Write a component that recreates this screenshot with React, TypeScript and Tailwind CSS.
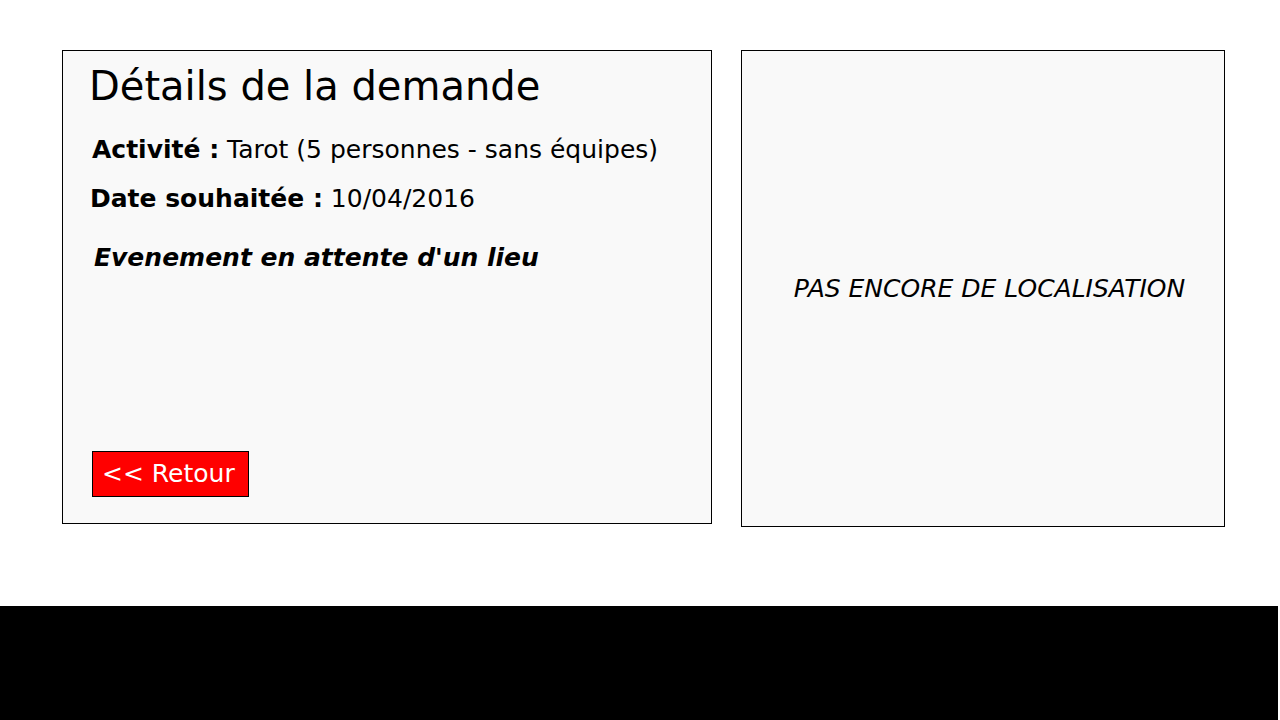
export default function App() {
  return (
    <div className="flex min-h-screen flex-col bg-white font-['DejaVu_Sans',sans-serif] text-[25px] leading-8 text-black">
      <main className="grid flex-1 grid-cols-[650fr_484fr] items-start gap-[29px] pt-[50px] pr-[55px] pb-[79px] pl-[62px]">
        <section className="flex min-h-[474px] flex-col items-start border border-black bg-[#f9f9f9] px-[26px] pt-[9px] pb-[26px]">
          <h1 className="text-[40px] leading-[52px]">Détails de la demande</h1>
          <p className="mt-[22px] pl-[3px]">
            <strong>Activité :</strong> Tarot (5 personnes - sans équipes)
          </p>
          <p className="mt-[17px] pl-px">
            <strong>Date souhaitée :</strong> 10/04/2016
          </p>
          <p className="mt-[27px] pl-[5px] font-bold italic">Evenement en attente d'un lieu</p>
          <button type="button" className="mt-auto ml-[3px] border border-black bg-[#ff0000] py-1.5 pr-[13px] pl-[9px] text-white">
            &lt;&lt; Retour
          </button>
        </section>
        <section className="flex min-h-[477px] items-center justify-center border border-black bg-[#f9f9f9] pl-[13px]">
          <p className="italic">PAS ENCORE DE LOCALISATION</p>
        </section>
      </main>
      <footer className="mr-0.5 h-[114px] bg-black" />
    </div>
  );
}
